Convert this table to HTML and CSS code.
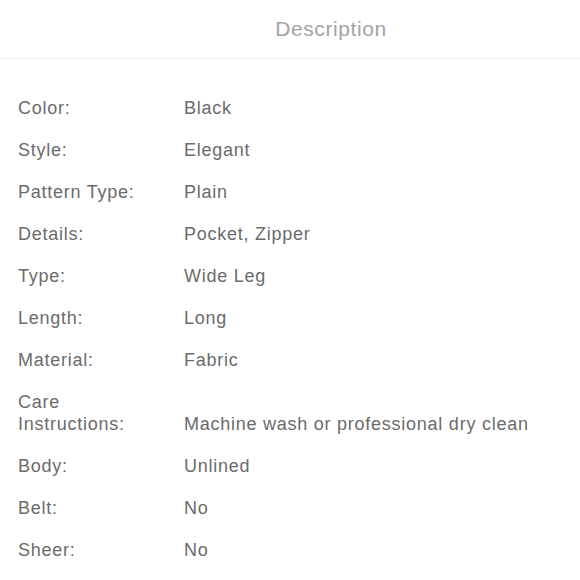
FILE: index.html
```html
<!DOCTYPE html>
<html>
<head>
<meta charset="utf-8">
<link rel="stylesheet" href="styles.css">
</head>
<body>
<div class="sheet">
  <div class="header"><span class="title">Description</span></div>
  <div class="list">
    <div class="row"><div class="label">Color:</div><div class="value">Black</div></div>
    <div class="row"><div class="label">Style:</div><div class="value">Elegant</div></div>
    <div class="row"><div class="label">Pattern Type:</div><div class="value">Plain</div></div>
    <div class="row"><div class="label">Details:</div><div class="value">Pocket, Zipper</div></div>
    <div class="row"><div class="label">Type:</div><div class="value">Wide Leg</div></div>
    <div class="row"><div class="label">Length:</div><div class="value">Long</div></div>
    <div class="row"><div class="label">Material:</div><div class="value">Fabric</div></div>
    <div class="row"><div class="label">Care<br>Instructions:</div><div class="value">Machine wash or professional dry clean</div></div>
    <div class="row"><div class="label">Body:</div><div class="value">Unlined</div></div>
    <div class="row"><div class="label">Belt:</div><div class="value">No</div></div>
    <div class="row"><div class="label">Sheer:</div><div class="value">No</div></div>
  </div>
</div>
</body>
</html>
```

FILE: styles.css
```css
html, body {
  margin: 0;
  padding: 0;
  background: #fff;
}
.sheet {
  width: 580px;
  font-family: "Liberation Sans", Arial, sans-serif;
}
.header {
  height: 58px;
  border-bottom: 1px solid #eeeeee;
  display: flex;
  align-items: center;
  justify-content: center;
  padding-left: 82px;
}
.title {
  font-size: 21px;
  color: #a3a3a3;
  letter-spacing: 0.6px;
}
.list {
  padding-top: 28px;
}
.row {
  display: flex;
  align-items: flex-end;
  padding: 10px 0 10px 18px;
  font-size: 18px;
  line-height: 22px;
  color: #6b6b6b;
  letter-spacing: 0.75px;
}
.label {
  width: 166px;
  flex: none;
}
.value {
  flex: 1;
}
```
